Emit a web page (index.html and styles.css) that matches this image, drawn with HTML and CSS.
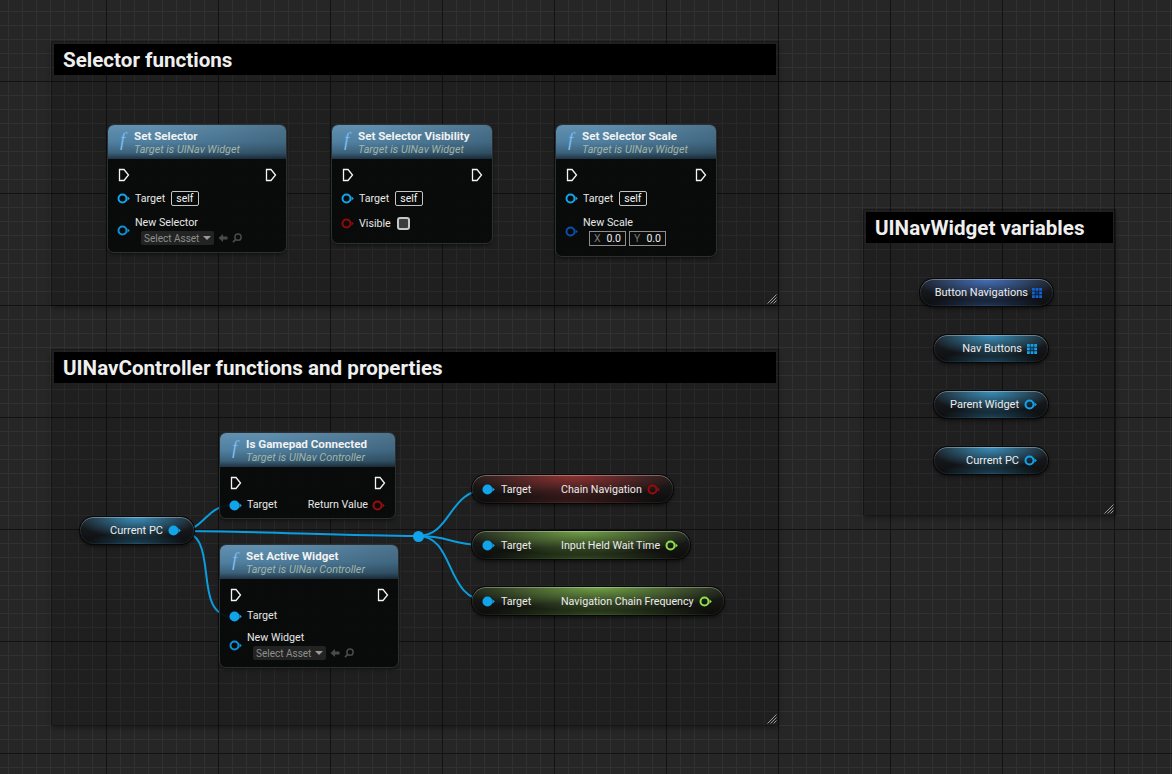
FILE: index.html
```html
<!DOCTYPE html>
<html>
<head>
<meta charset="utf-8">
<link rel="stylesheet" href="styles.css">
</head>
<body>
<div class="canvas">

  <div class="comment cm1"><div class="comment-title">Selector functions</div>
    <svg class="resize" viewBox="0 0 12 12"><path d="M11.5 2.5 L2.5 11.5 M11.5 5.5 L5.5 11.5 M11.5 8.5 L8.5 11.5" stroke="#9a9a9a" stroke-width="1"/></svg></div>
  <div class="comment cm2"><div class="comment-title">UINavController functions and properties</div>
    <svg class="resize" viewBox="0 0 12 12"><path d="M11.5 2.5 L2.5 11.5 M11.5 5.5 L5.5 11.5 M11.5 8.5 L8.5 11.5" stroke="#9a9a9a" stroke-width="1"/></svg></div>
  <div class="comment cm3"><div class="comment-title">UINavWidget variables</div>
    <svg class="resize" viewBox="0 0 12 12"><path d="M11.5 2.5 L2.5 11.5 M11.5 5.5 L5.5 11.5 M11.5 8.5 L8.5 11.5" stroke="#9a9a9a" stroke-width="1"/></svg></div>

  <svg class="wires" width="1172" height="774" viewBox="0 0 1172 774">
    <g fill="none" stroke="#0b9de0" stroke-width="2">
      <path d="M179 531 C 260 531, 340 536, 418 536"/>
      <path d="M179 531 C 206 531, 204 505, 234 505"/>
      <path d="M179 531 C 224 531, 188 617, 234 617"/>
      <path d="M418 536 C 452 536, 448 489, 489 489"/>
      <path d="M418 536 C 452 536, 448 545, 489 545"/>
      <path d="M418 536 C 456 536, 444 601, 489 601"/>
    </g>
  </svg>

  <!-- Set Selector -->
  <div class="node n-sel">
    <div class="hdr"><span class="fn">f</span><div><div class="ttl">Set Selector</div><div class="sub">Target is UINav Widget</div></div></div>
    <div class="nbody">
      <div class="row exec">
        <svg class="ex" viewBox="0 0 12 14"><path d="M1.5 1.5 H6 L10.5 7 L6 12.5 H1.5 Z"/></svg>
        <svg class="ex" viewBox="0 0 12 14"><path d="M1.5 1.5 H6 L10.5 7 L6 12.5 H1.5 Z"/></svg>
      </div>
      <div class="row r24">
        <svg class="pin" viewBox="0 0 13 11"><circle cx="5.5" cy="5.5" r="4" fill="none" stroke="#12a4ea" stroke-width="2"/><path d="M10.5 3.3 L12.8 5.5 L10.5 7.7Z" fill="#12a4ea"/></svg>
        <span class="lbl">Target</span><span class="self">self</span>
      </div>
      <div class="row multi">
        <svg class="pin" viewBox="0 0 13 11"><circle cx="5.5" cy="5.5" r="4" fill="none" stroke="#0f8fd6" stroke-width="2"/><path d="M10.5 3.3 L12.8 5.5 L10.5 7.7Z" fill="#0f8fd6"/></svg>
        <div class="stack"><span class="lbl">New Selector</span>
          <div class="asset-line"><span class="asset">Select Asset<i class="caret"></i></span>
            <svg class="tool" viewBox="0 0 10 10"><path d="M0.5 5 L5 1 V3.4 H9.5 V6.6 H5 V9 Z" fill="#4a4a4a"/></svg>
            <svg class="tool" viewBox="0 0 10 10"><circle cx="6" cy="4.2" r="3.1" fill="none" stroke="#4a4a4a" stroke-width="1.5"/><path d="M3.8 6.4 L1 9.2" stroke="#4a4a4a" stroke-width="1.7"/></svg>
          </div>
        </div>
      </div>
    </div>
  </div>

  <!-- Set Selector Visibility -->
  <div class="node n-vis">
    <div class="hdr"><span class="fn">f</span><div><div class="ttl">Set Selector Visibility</div><div class="sub">Target is UINav Widget</div></div></div>
    <div class="nbody">
      <div class="row exec">
        <svg class="ex" viewBox="0 0 12 14"><path d="M1.5 1.5 H6 L10.5 7 L6 12.5 H1.5 Z"/></svg>
        <svg class="ex" viewBox="0 0 12 14"><path d="M1.5 1.5 H6 L10.5 7 L6 12.5 H1.5 Z"/></svg>
      </div>
      <div class="row r24">
        <svg class="pin" viewBox="0 0 13 11"><circle cx="5.5" cy="5.5" r="4" fill="none" stroke="#12a4ea" stroke-width="2"/><path d="M10.5 3.3 L12.8 5.5 L10.5 7.7Z" fill="#12a4ea"/></svg>
        <span class="lbl">Target</span><span class="self">self</span>
      </div>
      <div class="row r24">
        <svg class="pin" viewBox="0 0 13 11"><circle cx="5.5" cy="5.5" r="4" fill="none" stroke="#8c0a0a" stroke-width="2"/><path d="M10.5 3.3 L12.8 5.5 L10.5 7.7Z" fill="#8c0a0a"/></svg>
        <span class="lbl">Visible</span><span class="check"></span>
      </div>
    </div>
  </div>

  <!-- Set Selector Scale -->
  <div class="node n-scale">
    <div class="hdr"><span class="fn">f</span><div><div class="ttl">Set Selector Scale</div><div class="sub">Target is UINav Widget</div></div></div>
    <div class="nbody">
      <div class="row exec">
        <svg class="ex" viewBox="0 0 12 14"><path d="M1.5 1.5 H6 L10.5 7 L6 12.5 H1.5 Z"/></svg>
        <svg class="ex" viewBox="0 0 12 14"><path d="M1.5 1.5 H6 L10.5 7 L6 12.5 H1.5 Z"/></svg>
      </div>
      <div class="row r24">
        <svg class="pin" viewBox="0 0 13 11"><circle cx="5.5" cy="5.5" r="4" fill="none" stroke="#12a4ea" stroke-width="2"/><path d="M10.5 3.3 L12.8 5.5 L10.5 7.7Z" fill="#12a4ea"/></svg>
        <span class="lbl">Target</span><span class="self">self</span>
      </div>
      <div class="row multi">
        <svg class="pin" viewBox="0 0 13 11"><circle cx="5.5" cy="5.5" r="4" fill="none" stroke="#0a4ea8" stroke-width="2"/><path d="M10.5 3.3 L12.8 5.5 L10.5 7.7Z" fill="#0a4ea8"/></svg>
        <div class="stack"><span class="lbl">New Scale</span>
          <div class="asset-line vec"><span class="fld"><i>X</i>0.0</span><span class="fld"><i>Y</i>0.0</span></div>
        </div>
      </div>
    </div>
  </div>

  <!-- Is Gamepad Connected -->
  <div class="node n-pad">
    <div class="hdr"><span class="fn">f</span><div><div class="ttl">Is Gamepad Connected</div><div class="sub">Target is UINav Controller</div></div></div>
    <div class="nbody">
      <div class="row exec">
        <svg class="ex" viewBox="0 0 12 14"><path d="M1.5 1.5 H6 L10.5 7 L6 12.5 H1.5 Z"/></svg>
        <svg class="ex" viewBox="0 0 12 14"><path d="M1.5 1.5 H6 L10.5 7 L6 12.5 H1.5 Z"/></svg>
      </div>
      <div class="row r22">
        <svg class="pin" viewBox="0 0 13 11"><circle cx="5.5" cy="5.5" r="5" fill="#12a4ea"/><path d="M10.5 3.3 L12.8 5.5 L10.5 7.7Z" fill="#12a4ea"/></svg>
        <span class="lbl">Target</span><span class="grow"></span>
        <span class="lbl">Return Value</span>
        <svg class="pin out" viewBox="0 0 13 11"><circle cx="5.5" cy="5.5" r="4" fill="none" stroke="#9a0b0b" stroke-width="2"/><path d="M10.5 3.3 L12.8 5.5 L10.5 7.7Z" fill="#9a0b0b"/></svg>
      </div>
    </div>
  </div>

  <!-- Set Active Widget -->
  <div class="node n-act">
    <div class="hdr"><span class="fn">f</span><div><div class="ttl">Set Active Widget</div><div class="sub">Target is UINav Controller</div></div></div>
    <div class="nbody">
      <div class="row exec">
        <svg class="ex" viewBox="0 0 12 14"><path d="M1.5 1.5 H6 L10.5 7 L6 12.5 H1.5 Z"/></svg>
        <svg class="ex" viewBox="0 0 12 14"><path d="M1.5 1.5 H6 L10.5 7 L6 12.5 H1.5 Z"/></svg>
      </div>
      <div class="row r20">
        <svg class="pin" viewBox="0 0 13 11"><circle cx="5.5" cy="5.5" r="5" fill="#12a4ea"/><path d="M10.5 3.3 L12.8 5.5 L10.5 7.7Z" fill="#12a4ea"/></svg>
        <span class="lbl">Target</span>
      </div>
      <div class="row multi">
        <svg class="pin" viewBox="0 0 13 11"><circle cx="5.5" cy="5.5" r="4" fill="none" stroke="#0f8fd6" stroke-width="2"/><path d="M10.5 3.3 L12.8 5.5 L10.5 7.7Z" fill="#0f8fd6"/></svg>
        <div class="stack"><span class="lbl">New Widget</span>
          <div class="asset-line"><span class="asset">Select Asset<i class="caret"></i></span>
            <svg class="tool" viewBox="0 0 10 10"><path d="M0.5 5 L5 1 V3.4 H9.5 V6.6 H5 V9 Z" fill="#4a4a4a"/></svg>
            <svg class="tool" viewBox="0 0 10 10"><circle cx="6" cy="4.2" r="3.1" fill="none" stroke="#4a4a4a" stroke-width="1.5"/><path d="M3.8 6.4 L1 9.2" stroke="#4a4a4a" stroke-width="1.7"/></svg>
          </div>
        </div>
      </div>
    </div>
  </div>

  <!-- Variable getters -->
  <div class="var v-btn blue"><span>Button Navigations</span>
    <svg class="arr" viewBox="0 0 10 10" fill="#1262d2"><rect x="0" y="0" width="2.8" height="2.8"/><rect x="3.6" y="0" width="2.8" height="2.8"/><rect x="7.2" y="0" width="2.8" height="2.8"/><rect x="0" y="3.6" width="2.8" height="2.8"/><rect x="3.6" y="3.6" width="2.8" height="2.8" fill="#0a3f8e"/><rect x="7.2" y="3.6" width="2.8" height="2.8"/><rect x="0" y="7.2" width="2.8" height="2.8"/><rect x="3.6" y="7.2" width="2.8" height="2.8"/><rect x="7.2" y="7.2" width="2.8" height="2.8"/></svg></div>
  <div class="var v-nav teal"><span>Nav Buttons</span>
    <svg class="arr" viewBox="0 0 10 10" fill="#169fe8"><rect x="0" y="0" width="2.8" height="2.8"/><rect x="3.6" y="0" width="2.8" height="2.8"/><rect x="7.2" y="0" width="2.8" height="2.8"/><rect x="0" y="3.6" width="2.8" height="2.8"/><rect x="3.6" y="3.6" width="2.8" height="2.8" fill="#0b6aa0"/><rect x="7.2" y="3.6" width="2.8" height="2.8"/><rect x="0" y="7.2" width="2.8" height="2.8"/><rect x="3.6" y="7.2" width="2.8" height="2.8"/><rect x="7.2" y="7.2" width="2.8" height="2.8"/></svg></div>
  <div class="var v-par teal"><span>Parent Widget</span>
    <svg class="pin" viewBox="0 0 13 11"><circle cx="5.5" cy="5.5" r="4" fill="none" stroke="#12a4ea" stroke-width="2"/><path d="M10.5 3.3 L12.8 5.5 L10.5 7.7Z" fill="#12a4ea"/></svg></div>
  <div class="var v-pc teal"><span>Current PC</span>
    <svg class="pin" viewBox="0 0 13 11"><circle cx="5.5" cy="5.5" r="4" fill="none" stroke="#12a4ea" stroke-width="2"/><path d="M10.5 3.3 L12.8 5.5 L10.5 7.7Z" fill="#12a4ea"/></svg></div>
  <div class="var v-pc2 teal"><span>Current PC</span>
    <svg class="pin" viewBox="0 0 13 11"><circle cx="5.5" cy="5.5" r="5" fill="#12a4ea"/><path d="M10.5 3.3 L12.8 5.5 L10.5 7.7Z" fill="#12a4ea"/></svg></div>

  <!-- Property getters -->
  <div class="var getter g1 red">
    <div class="gl"><svg class="pin" viewBox="0 0 13 11"><circle cx="5.5" cy="5.5" r="5" fill="#12a4ea"/><path d="M10.5 3.3 L12.8 5.5 L10.5 7.7Z" fill="#12a4ea"/></svg><span>Target</span></div>
    <span class="gt">Chain Navigation</span>
    <svg class="pin" viewBox="0 0 13 11"><circle cx="5.5" cy="5.5" r="4" fill="none" stroke="#9a0b0b" stroke-width="2"/><path d="M10.5 3.3 L12.8 5.5 L10.5 7.7Z" fill="#9a0b0b"/></svg>
  </div>
  <div class="var getter g2 green">
    <div class="gl"><svg class="pin" viewBox="0 0 13 11"><circle cx="5.5" cy="5.5" r="5" fill="#12a4ea"/><path d="M10.5 3.3 L12.8 5.5 L10.5 7.7Z" fill="#12a4ea"/></svg><span>Target</span></div>
    <span class="gt">Input Held Wait Time</span>
    <svg class="pin" viewBox="0 0 13 11"><circle cx="5.5" cy="5.5" r="4" fill="none" stroke="#8fe04a" stroke-width="2"/><path d="M10.5 3.3 L12.8 5.5 L10.5 7.7Z" fill="#8fe04a"/></svg>
  </div>
  <div class="var getter g3 green">
    <div class="gl"><svg class="pin" viewBox="0 0 13 11"><circle cx="5.5" cy="5.5" r="5" fill="#12a4ea"/><path d="M10.5 3.3 L12.8 5.5 L10.5 7.7Z" fill="#12a4ea"/></svg><span>Target</span></div>
    <span class="gt">Navigation Chain Frequency</span>
    <svg class="pin" viewBox="0 0 13 11"><circle cx="5.5" cy="5.5" r="4" fill="none" stroke="#8fe04a" stroke-width="2"/><path d="M10.5 3.3 L12.8 5.5 L10.5 7.7Z" fill="#8fe04a"/></svg>
  </div>

  <div class="reroute"></div>
</div>
</body>
</html>
```

FILE: styles.css
```css
* { box-sizing: border-box; }
html, body { margin: 0; padding: 0; background: #262626; }
body { font-family: Roboto, "Noto Sans", "Liberation Sans", sans-serif; color: #e2e2e2; }

.canvas {
  position: relative;
  width: 1172px;
  height: 774px;
  overflow: hidden;
  background-color: #262626;
  background-image:
    linear-gradient(to right, #131313 1px, transparent 1px),
    linear-gradient(to bottom, #131313 1px, transparent 1px),
    linear-gradient(to right, #313131 1px, transparent 1px),
    linear-gradient(to bottom, #313131 1px, transparent 1px);
  background-size: 112px 112px, 112px 112px, 14px 14px, 14px 14px;
  background-position: 106px 0, 0 81px, 8px 0, 0 11px;
}

/* comment boxes */
.comment {
  position: absolute;
  padding: 2px;
  background: rgba(0, 0, 0, 0.18);
  box-shadow: 0 0 0 1px rgba(0, 0, 0, 0.35), 0 3px 5px rgba(0, 0, 0, 0.35);
}
.comment-title {
  height: 31px;
  background: #000;
  color: #efefef;
  font-weight: 700;
  font-size: 20.6px;
  line-height: 32px;
  padding: 0 0 0 9px;
  white-space: nowrap;
}
.resize { position: absolute; right: 1px; bottom: 1px; width: 12px; height: 12px; }
.cm1 { left: 52px; top: 42px; width: 726px; height: 263px; }
.cm2 { left: 52px; top: 350px; width: 726px; height: 375px; }
.cm3 { left: 864px; top: 210px; width: 251px; height: 305px; }

.wires { position: absolute; left: 0; top: 0; }

/* function nodes */
.node {
  position: absolute;
  border-radius: 6px;
  background: rgba(9, 11, 11, 0.94);
  box-shadow: 0 0 0 1px #2c2f30, 0 2px 4px rgba(0, 0, 0, 0.6);
  overflow: hidden;
}
.hdr {
  height: 34px;
  display: flex;
  align-items: flex-start;
  padding: 5px 6px 0 10px;
  background:
    linear-gradient(to right, rgba(0, 0, 0, 0) 25%, rgba(0, 0, 0, 0.2) 100%),
    linear-gradient(to bottom, #6190b0 0%, #5080a0 50%, #3b617a 82%, #1f3342 100%);
  white-space: nowrap;
}
.fn {
  width: 16px;
  font-family: "Liberation Serif", "DejaVu Serif", serif;
  font-style: italic;
  font-size: 19px;
  line-height: 20px;
  color: #7cbaf0;
  padding-left: 2px;
}
.ttl { font-size: 11.6px; font-weight: 700; line-height: 13px; color: #f2f2f2; }
.sub { font-size: 10.8px; font-style: italic; line-height: 14px; color: #a2b5a8; }

.nbody { padding: 5px 0 7px; }
.row { display: flex; align-items: center; padding: 0 10px 0 9px; }
.row.exec { height: 22px; justify-content: space-between; padding: 0 9px 0 10px; }
.r24 { height: 25px; }
.r22 { height: 22px; }
.r20 { height: 20px; }
.row.multi { align-items: center; padding-top: 5px; }
.ex { width: 12px; height: 14px; }
.ex path { fill: none; stroke: #f4f4f4; stroke-width: 1.3; stroke-linejoin: miter; }
.pin { width: 13px; height: 11px; flex: none; }
.row .pin { margin-right: 5px; }
.row .pin.out { margin: 0 0 0 4px; }
.lbl { font-size: 10.7px; line-height: 14px; color: #e6e6e6; white-space: nowrap; }
.grow { flex: 1; }
.self {
  margin-left: 6px;
  height: 15px;
  padding: 0 4px;
  border: 1px solid #c4c4c4;
  border-radius: 2px;
  font-size: 10.5px;
  line-height: 13px;
  color: #f0f0f0;
}
.check {
  margin-left: 6px;
  width: 13px;
  height: 13px;
  border: 2px solid #c6c6c6;
  border-radius: 3px;
  background: #3c3c3c;
}
.stack { display: flex; flex-direction: column; }
.asset-line { display: flex; align-items: center; margin: 1px 0 0 6px; height: 14px; gap: 4px; }
.asset {
  display: flex;
  align-items: center;
  height: 14px;
  padding: 0 3px 0 3px;
  background: #232323;
  border-radius: 2px;
  font-size: 10px;
  color: #8e8e8e;
  white-space: nowrap;
}
.caret {
  margin-left: 4px;
  width: 0; height: 0;
  border-left: 4px solid transparent;
  border-right: 4px solid transparent;
  border-top: 4px solid #9a9a9a;
}
.tool { width: 10px; height: 10px; }
.asset-line.vec { gap: 3px; height: 15px; margin-top: 1px; }
.fld {
  display: flex;
  justify-content: space-between;
  align-items: center;
  width: 37px;
  height: 15px;
  padding: 0 4px 0 4px;
  border: 1px solid #8e8e8e;
  background: #0c0c0c;
  font-size: 10.5px;
  color: #f0f0f0;
}
.fld i { font-style: normal; color: #7a7a7a; }

.n-sel { left: 108px; top: 125px; width: 178px; }
.n-vis { left: 332px; top: 125px; width: 160px; }
.n-scale { left: 556px; top: 125px; width: 160px; }
.n-scale .nbody { padding-bottom: 10px; }
.n-pad { left: 220px; top: 433px; width: 175px; }
.n-pad .nbody { padding-bottom: 2px; }
.n-act { left: 220px; top: 545px; width: 178px; }

/* variable pills */
.var {
  position: absolute;
  height: 27px;
  border-radius: 14px;
  display: flex;
  align-items: center;
  justify-content: flex-end;
  gap: 5px;
  padding: 0 11px 0 10px;
  font-size: 11px;
  color: #ececec;
  white-space: nowrap;
  box-shadow: inset 0 1px 0 rgba(255, 255, 255, 0.28), inset 0 0 0 1px rgba(255, 255, 255, 0.06), 0 0 0 1px #070707, 0 2px 4px rgba(0, 0, 0, 0.7);
}
.var.blue {
  background:
    radial-gradient(ellipse 55% 80% at 50% 0%, rgba(72, 118, 196, 0.95), rgba(72, 118, 196, 0) 100%),
    radial-gradient(ellipse 45% 45% at 50% 100%, rgba(50, 90, 160, 0.5), rgba(50, 90, 160, 0) 100%),
    linear-gradient(#1d2024, #0c0d0f);
}
.var.teal {
  background:
    radial-gradient(ellipse 55% 80% at 50% 0%, rgba(60, 150, 196, 0.95), rgba(60, 150, 196, 0) 100%),
    radial-gradient(ellipse 45% 45% at 50% 100%, rgba(40, 120, 160, 0.5), rgba(40, 120, 160, 0) 100%),
    linear-gradient(#1d2024, #0c0d0f);
}
.var.red {
  background:
    radial-gradient(ellipse 55% 85% at 50% 0%, rgba(150, 50, 50, 0.95), rgba(150, 50, 50, 0) 100%),
    radial-gradient(ellipse 45% 45% at 50% 100%, rgba(120, 40, 40, 0.45), rgba(120, 40, 40, 0) 100%),
    linear-gradient(#1f1d1d, #0d0c0c);
}
.var.green {
  background:
    radial-gradient(ellipse 55% 85% at 50% 0%, rgba(118, 168, 72, 0.95), rgba(118, 168, 72, 0) 100%),
    radial-gradient(ellipse 45% 45% at 50% 100%, rgba(90, 140, 50, 0.45), rgba(90, 140, 50, 0) 100%),
    linear-gradient(#1e201c, #0c0d0b);
}
.arr { width: 10px; height: 10px; flex: none; }
.v-btn { left: 920px; top: 279px; width: 133px; gap: 4px; }
.v-nav { left: 934px; top: 335px; width: 114px; }
.v-par { left: 934px; top: 391px; width: 114px; }
.v-pc { left: 934px; top: 447px; width: 114px; }
.v-pc2 { left: 80px; top: 517px; width: 114px; padding-right: 13px; }

.getter { justify-content: flex-start; padding: 0 13px 0 10px; gap: 0; font-size: 10.7px; }
.gl { width: 79px; display: flex; align-items: center; flex: none; }
.gl .pin { margin-right: 6px; }
.gt { margin-right: 5px; }
.g1 { left: 472px; top: 475px; width: 201px; height: 28px; }
.g2 { left: 472px; top: 531px; width: 218px; height: 28px; }
.g3 { left: 472px; top: 587px; width: 252px; height: 28px; }

.reroute {
  position: absolute;
  left: 413px;
  top: 531px;
  width: 11px;
  height: 11px;
  border-radius: 50%;
  background: #12a4ea;
}
```
